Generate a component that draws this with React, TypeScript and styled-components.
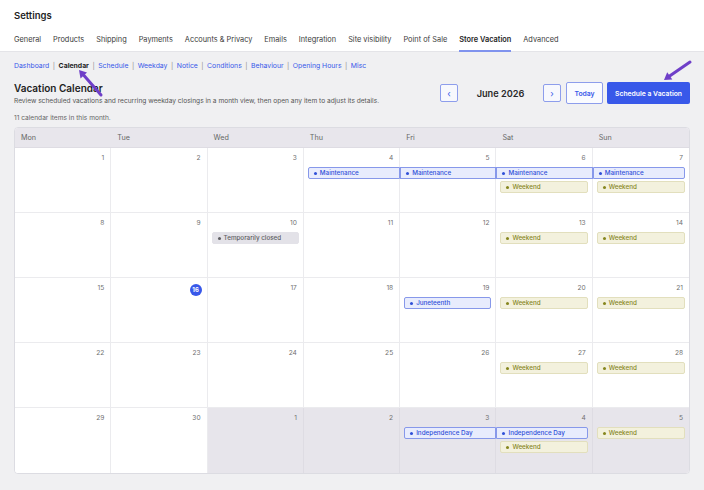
import React from 'react';
import styled, { createGlobalStyle, css } from 'styled-components';

const Global = createGlobalStyle`
  html, body { margin: 0; padding: 0; background: #f0f0f2; }
  body {
    font-family: Inter, "Noto Sans", "Liberation Sans", sans-serif;
    color: #1e1e1e;
    -webkit-font-smoothing: antialiased;
  }
  * { box-sizing: border-box; }
`;

const Page = styled.div`
  position: relative;
  width: 704px;
  min-height: 490px;
`;

const Header = styled.header`
  background: #fff;
  height: 52px;
  padding: 0 14px;
  border-bottom: 1px solid #e4e4e8;
  display: flex;
  flex-direction: column;
`;

const Title = styled.h1`
  margin: 0;
  padding-top: 10px;
  font-size: 9.5px;
  line-height: 11px;
  font-weight: 600;
`;

const Tabs = styled.nav`
  margin-top: auto;
  display: flex;
  gap: 12px;
`;

const Tab = styled.span<{ $active?: boolean }>`
  font-size: 7.36px;
  line-height: 10px;
  padding-bottom: 5px;
  margin-bottom: -1px;
  color: ${p => (p.$active ? '#1e1e1e' : '#3a3a3a')};
  font-weight: ${p => (p.$active ? 600 : 400)};
  border-bottom: 2px solid ${p => (p.$active ? '#8093ee' : 'transparent')};
`;

const Content = styled.main`
  padding: 9px 14px 16px;
`;

const SubNav = styled.div`
  display: flex;
  align-items: center;
  font-size: 6.85px;
  line-height: 10px;
`;

const SubLink = styled.span<{ $current?: boolean }>`
  color: ${p => (p.$current ? '#1e1e1e' : '#3858e9')};
  font-weight: ${p => (p.$current ? 700 : 400)};
`;

const Sep = styled.span`
  color: #8a8a8a;
  margin: 0 3.5px;
`;

const SectionHead = styled.div`
  margin-top: 11px;
  display: flex;
  justify-content: space-between;
  align-items: flex-start;
`;

const Intro = styled.div`
  display: flex;
  flex-direction: column;
`;

const H2 = styled.h2`
  margin: 0;
  font-size: 10px;
  line-height: 12px;
  font-weight: 600;
`;

const Desc = styled.p`
  margin: 2px 0 0;
  font-size: 6.6px;
  line-height: 10px;
  color: #555;
`;

const Count = styled.p`
  margin: 7px 0 0;
  font-size: 6.6px;
  line-height: 10px;
  color: #666;
`;

const Toolbar = styled.div`
  display: flex;
  align-items: center;
`;

const NavBtn = styled.button`
  width: 18px;
  height: 18px;
  padding: 0;
  display: flex;
  align-items: center;
  justify-content: center;
  border: 1px solid #8d9dec;
  border-radius: 2px;
  background: #f7f8fd;
  color: #3858e9;
  font-family: inherit;
  font-size: 9px;
  line-height: 1;
`;

const MonthLabel = styled.div`
  width: 85px;
  text-align: center;
  font-size: 9.2px;
  font-weight: 600;
  color: #2a2a2a;
`;

const TodayBtn = styled.button`
  margin-left: 5px;
  width: 37px;
  height: 22px;
  padding: 0;
  border: 1px solid #8d9dec;
  border-radius: 2px;
  background: #fafbff;
  color: #3858e9;
  font-family: inherit;
  font-size: 6.8px;
  font-weight: 600;
`;

const PrimaryBtn = styled.button`
  margin-left: 4px;
  width: 83px;
  height: 22px;
  padding: 0;
  border: none;
  border-radius: 2px;
  background: #3858e9;
  color: #fff;
  font-family: inherit;
  font-size: 6.8px;
  font-weight: 600;
`;

const Calendar = styled.div`
  margin-top: 4px;
  border: 1px solid #dcdce2;
  border-radius: 4px;
  overflow: hidden;
  background: #fff;
  display: grid;
  grid-template-columns: repeat(7, 1fr);
  grid-template-rows: 20px repeat(5, 65px);
`;

const DayHead = styled.div`
  background: #e8e6ec;
  font-size: 7.2px;
  color: #666;
  padding-left: 6px;
  display: flex;
  align-items: center;
  border-bottom: 1px solid #dedce3;
`;

const Cell = styled.div<{ $out?: boolean; $lastCol?: boolean; $lastRow?: boolean }>`
  background: ${p => (p.$out ? '#e7e5eb' : '#fff')};
  border-right: ${p => (p.$lastCol ? 'none' : `1px solid ${p.$out ? '#dedce3' : '#ebebee'}`)};
  border-bottom: ${p => (p.$lastRow ? 'none' : '1px solid #ebebee')};
  display: flex;
  flex-direction: column;
  min-width: 0;
`;

const DayNum = styled.div`
  height: 15px;
  padding: 6px 6px 0 0;
  text-align: right;
  font-size: 6.6px;
  line-height: 9px;
  color: #707070;
`;

const TodayBadge = styled.span`
  display: inline-flex;
  align-items: center;
  justify-content: center;
  width: 12px;
  height: 12px;
  margin-right: -1px;
  border-radius: 50%;
  background: #3858e9;
  color: #fff;
  font-size: 6px;
  font-weight: 700;
  line-height: 1;
  vertical-align: top;
`;

const Events = styled.div`
  margin-top: 4px;
  display: flex;
  flex-direction: column;
  gap: 2px;
`;

type Kind = 'blue' | 'olive' | 'gray';

const kindStyles: Record<Kind, ReturnType<typeof css>> = {
  blue: css`
    background: #e8ecfd;
    border: 1px solid #8798ea;
    color: #3050d8;
  `,
  olive: css`
    background: #f3f1dd;
    border: 1px solid #e2dfbd;
    color: #86861e;
  `,
  gray: css`
    background: #e3e2e8;
    border: 1px solid #e3e2e8;
    color: #5e5e62;
  `,
};

const Chip = styled.div<{ $kind: Kind; $start: boolean; $end: boolean }>`
  height: 12px;
  display: flex;
  align-items: center;
  gap: 3px;
  padding: 0 5px;
  font-size: 6.3px;
  font-weight: 500;
  white-space: nowrap;
  overflow: hidden;
  ${p => kindStyles[p.$kind]};
  margin-left: ${p => (p.$start ? '4px' : '0')};
  margin-right: ${p => (p.$end ? '4px' : '-1px')};
  border-radius: ${p =>
    `${p.$start ? 2 : 0}px ${p.$end ? 2 : 0}px ${p.$end ? 2 : 0}px ${p.$start ? 2 : 0}px`};
`;

const Dot = styled.span`
  width: 3px;
  height: 3px;
  border-radius: 50%;
  background: currentColor;
  flex: none;
`;

const Overlay = styled.svg`
  position: absolute;
  left: 0;
  top: 0;
  pointer-events: none;
`;

type Ev = { label: string; kind: Kind; start?: boolean; end?: boolean };
type Day = { n: number; out?: boolean; today?: boolean; events?: Ev[] };

const M = (start: boolean, end: boolean): Ev => ({ label: 'Maintenance', kind: 'blue', start, end });
const W: Ev = { label: 'Weekend', kind: 'olive', start: true, end: true };
const ID = (start: boolean, end: boolean): Ev => ({ label: 'Independence Day', kind: 'blue', start, end });

const weeks: Day[][] = [
  [
    { n: 1 }, { n: 2 }, { n: 3 },
    { n: 4, events: [M(true, false)] },
    { n: 5, events: [M(false, false)] },
    { n: 6, events: [M(false, false), W] },
    { n: 7, events: [M(false, true), W] },
  ],
  [
    { n: 8 }, { n: 9 },
    { n: 10, events: [{ label: 'Temporarily closed', kind: 'gray', start: true, end: true }] },
    { n: 11 }, { n: 12 },
    { n: 13, events: [W] },
    { n: 14, events: [W] },
  ],
  [
    { n: 15 }, { n: 16, today: true }, { n: 17 }, { n: 18 },
    { n: 19, events: [{ label: 'Juneteenth', kind: 'blue', start: true, end: true }] },
    { n: 20, events: [W] },
    { n: 21, events: [W] },
  ],
  [
    { n: 22 }, { n: 23 }, { n: 24 }, { n: 25 }, { n: 26 },
    { n: 27, events: [W] },
    { n: 28, events: [W] },
  ],
  [
    { n: 29 }, { n: 30 },
    { n: 1, out: true }, { n: 2, out: true },
    { n: 3, out: true, events: [ID(true, false)] },
    { n: 4, out: true, events: [ID(false, true), W] },
    { n: 5, out: true, events: [W] },
  ],
];

const tabs = ['General', 'Products', 'Shipping', 'Payments', 'Accounts & Privacy', 'Emails', 'Integration', 'Site visibility', 'Point of Sale', 'Store Vacation', 'Advanced'];
const subs = ['Dashboard', 'Calendar', 'Schedule', 'Weekday', 'Notice', 'Conditions', 'Behaviour', 'Opening Hours', 'Misc'];
const dayNames = ['Mon', 'Tue', 'Wed', 'Thu', 'Fri', 'Sat', 'Sun'];

const ARROW = '#6f3fc8';

export default function App() {
  return (
    <Page>
      <Global />
      <Header>
        <Title>Settings</Title>
        <Tabs>
          {tabs.map(t => (
            <Tab key={t} $active={t === 'Store Vacation'}>{t}</Tab>
          ))}
        </Tabs>
      </Header>
      <Content>
        <SubNav>
          {subs.map((s, i) => (
            <React.Fragment key={s}>
              {i > 0 && <Sep>|</Sep>}
              <SubLink $current={s === 'Calendar'}>{s}</SubLink>
            </React.Fragment>
          ))}
        </SubNav>
        <SectionHead>
          <Intro>
            <H2>Vacation Calendar</H2>
            <Desc>Review scheduled vacations and recurring weekday closings in a month view, then open any item to adjust its details.</Desc>
            <Count>11 calendar items in this month.</Count>
          </Intro>
          <Toolbar>
            <NavBtn aria-label="Previous month">‹</NavBtn>
            <MonthLabel>June 2026</MonthLabel>
            <NavBtn aria-label="Next month">›</NavBtn>
            <TodayBtn>Today</TodayBtn>
            <PrimaryBtn>Schedule a Vacation</PrimaryBtn>
          </Toolbar>
        </SectionHead>
        <Calendar>
          {dayNames.map(d => (
            <DayHead key={d}>{d}</DayHead>
          ))}
          {weeks.map((week, wi) =>
            week.map((day, di) => (
              <Cell key={`${wi}-${di}`} $out={day.out} $lastCol={di === 6} $lastRow={wi === 4}>
                <DayNum>{day.today ? <TodayBadge>{day.n}</TodayBadge> : day.n}</DayNum>
                {day.events && (
                  <Events>
                    {day.events.map((e, ei) => (
                      <Chip key={ei} $kind={e.kind} $start={!!e.start} $end={!!e.end}>
                        <Dot />
                        {e.label}
                      </Chip>
                    ))}
                  </Events>
                )}
              </Cell>
            ))
          )}
        </Calendar>
      </Content>
      <Overlay width="704" height="490" viewBox="0 0 704 490">
        <line x1="101" y1="95" x2="84" y2="75.5" stroke={ARROW} strokeWidth="3" strokeLinecap="round" />
        <polygon points="79,70 87,72.5 80.5,78.5" fill={ARROW} />
        <line x1="690" y1="62" x2="670" y2="75.8" stroke={ARROW} strokeWidth="3" strokeLinecap="round" />
        <polygon points="664,80 667.2,72.3 672.3,79.6" fill={ARROW} />
      </Overlay>
    </Page>
  );
}
